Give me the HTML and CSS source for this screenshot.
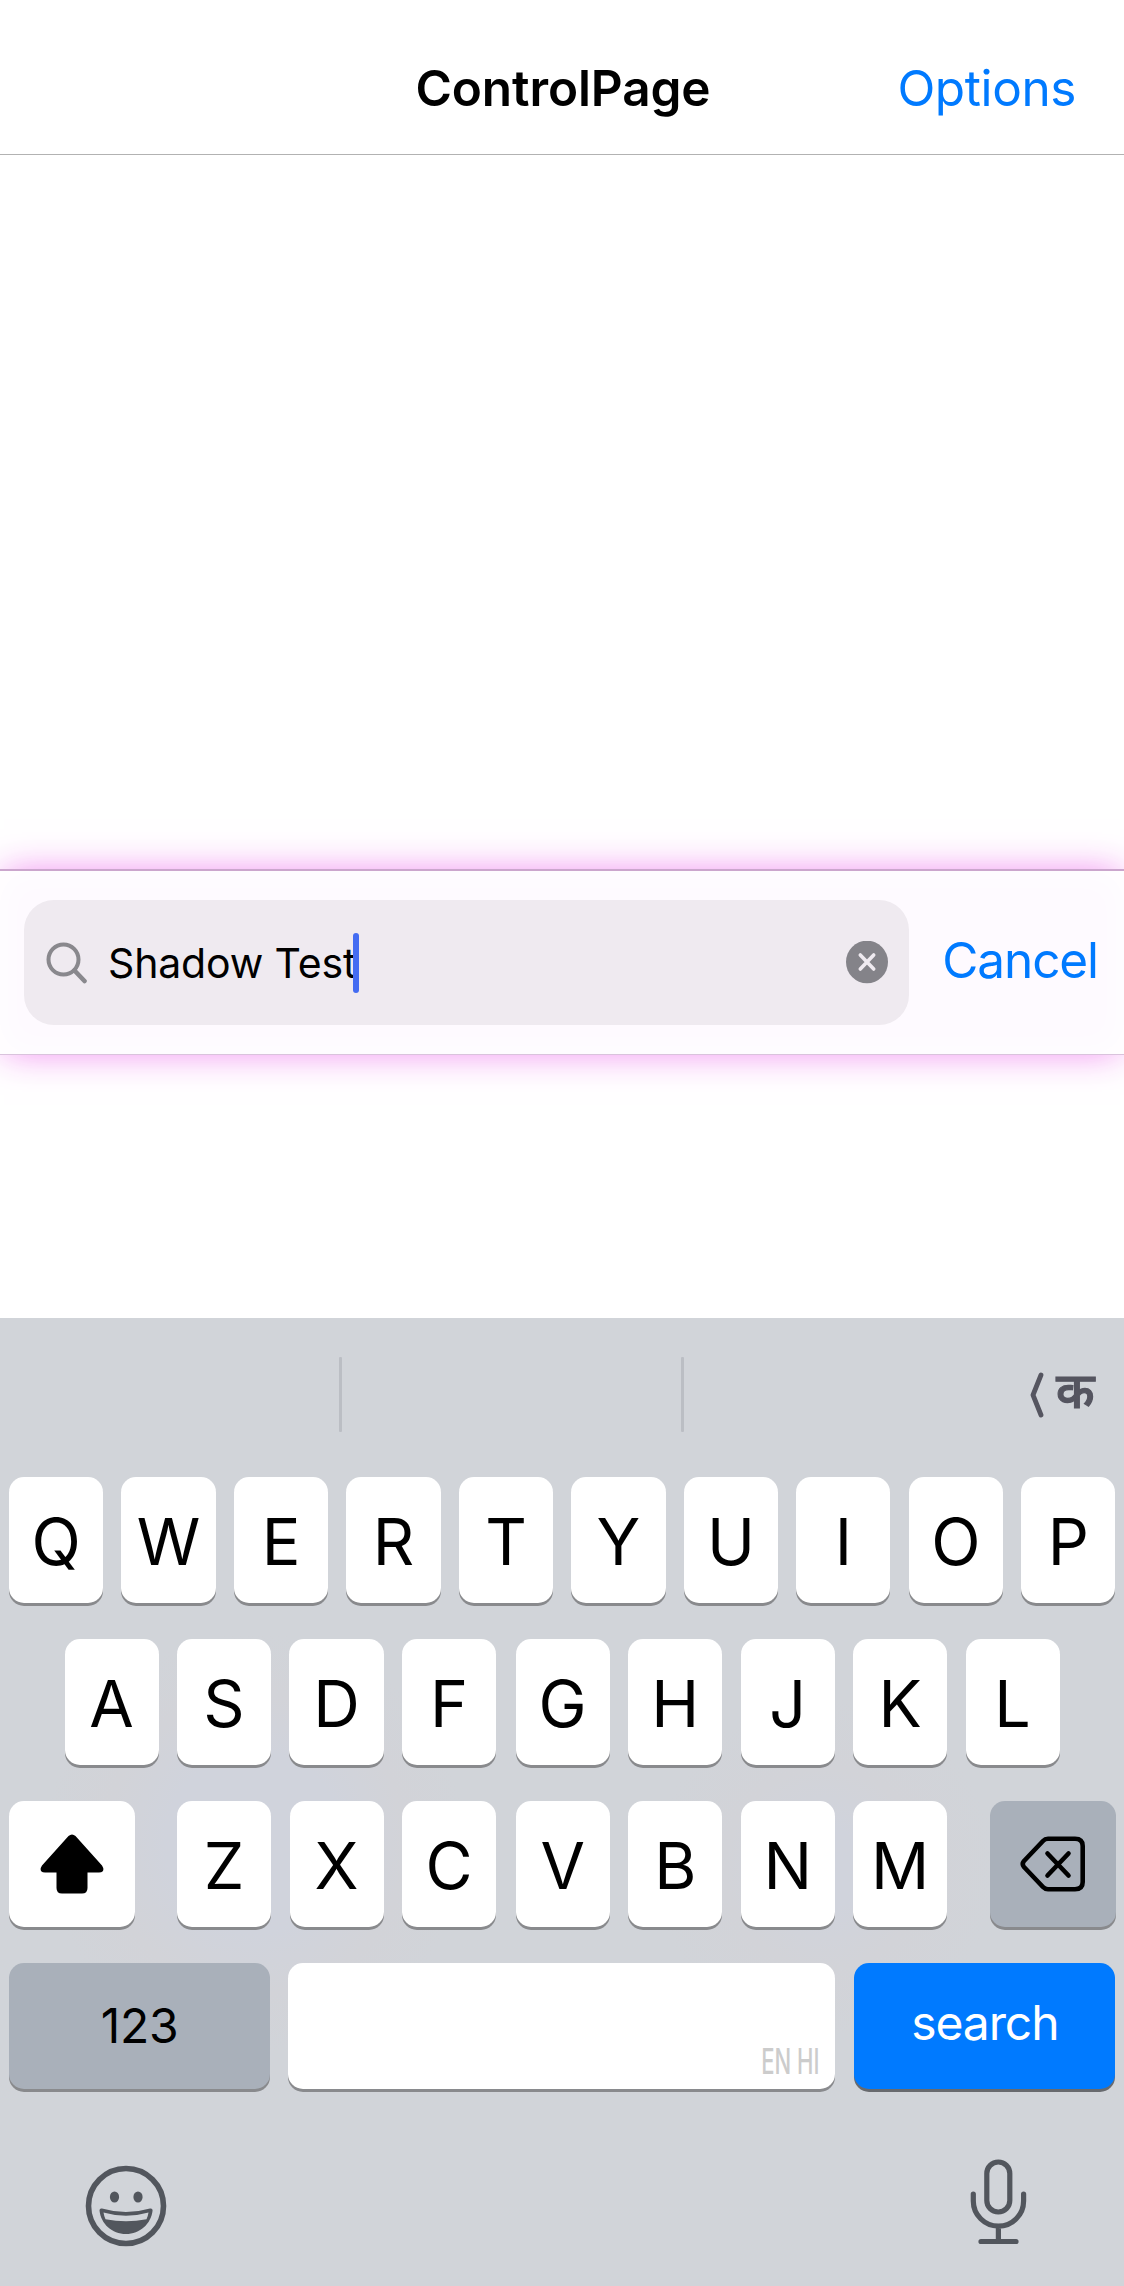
FILE: index.html
```html
<!DOCTYPE html>
<html lang="en">
<head>
<meta charset="utf-8">
<title>ControlPage</title>
<link rel="stylesheet" href="styles.css">
</head>
<body>
<header class="nav">
  <h1 class="nav-title">ControlPage</h1>
  <a class="nav-action">Options</a>
</header>
<main class="content">
  <div class="searchbar">
    <div class="field">
      <svg class="glass" width="42" height="42" viewBox="0 0 42 42" fill="none" stroke="#89888d" stroke-width="4" stroke-linecap="round"><circle cx="17.5" cy="17.5" r="15"/><path d="M28.5 28.5 38.5 39" stroke-width="4.6"/></svg>
      <span class="query">Shadow Test</span><span class="caret"></span>
      <svg class="clear" width="42" height="43" viewBox="0 0 42 43"><ellipse cx="21" cy="21" rx="21" ry="21.3" fill="#848389"/><path d="M14.3 14 27.7 28M27.7 14 14.3 28" stroke="#efeaf0" stroke-width="3.6" stroke-linecap="round"/></svg>
    </div>
    <a class="cancel">Cancel</a>
  </div>
</main>
<section class="keyboard">
  <div class="suggestions">
    <span class="slot"></span><span class="rule"></span><span class="slot"></span><span class="rule"></span>
    <span class="slot lang">
      <svg width="15" height="46" viewBox="0 0 15 46" fill="none" stroke="#555560" stroke-width="4.8" stroke-linecap="round" stroke-linejoin="round"><path d="M11 3 3 23 11 43"/></svg>
      <span class="hindi" lang="hi">क</span>
    </span>
  </div>
  <div class="row">
    <span class="key">Q</span><span class="key">W</span><span class="key">E</span><span class="key">R</span><span class="key">T</span><span class="key">Y</span><span class="key">U</span><span class="key">I</span><span class="key">O</span><span class="key">P</span>
  </div>
  <div class="row row-mid">
    <span class="key">A</span><span class="key">S</span><span class="key">D</span><span class="key">F</span><span class="key nudge">G</span><span class="key">H</span><span class="key">J</span><span class="key">K</span><span class="key">L</span>
  </div>
  <div class="row row-low">
    <span class="key wide shift"><svg width="64" height="60" viewBox="0 0 64 60"><path d="M28.5 2Q32 -1 35.5 2L62 31.5Q64.5 35.5 62.5 37.5Q61.5 38.5 59 38.5H47.5V54Q47.5 59.5 42 59.5H22Q16.5 59.5 16.5 54V38.5H5Q2.5 38.5 1.5 37.5Q-.5 35.5 2 31.5Z"/></svg></span>
    <span class="key">Z</span><span class="key">X</span><span class="key">C</span><span class="key nudge">V</span><span class="key">B</span><span class="key">N</span><span class="key">M</span>
    <span class="key wide dark del"><svg width="66" height="56" viewBox="0 0 66 56" fill="none" stroke="#000" stroke-width="4.6" stroke-linecap="round" stroke-linejoin="round"><path d="M28 2.8H55Q62.7 2.8 62.7 10V46Q62.7 53.2 55 53.2H28Q25 53.2 23 51L4 31Q1.5 28 4 25L23 5Q25 2.8 28 2.8Z"/><path d="M27.5 17.5 48.5 39.5M48.5 17.5 27.5 39.5"/></svg></span>
  </div>
  <div class="row row-base">
    <span class="key dark num">123</span>
    <span class="key space"><span class="languages">EN HI</span></span>
    <span class="key go">search</span>
  </div>
  <div class="dock">
    <svg width="82" height="82" viewBox="0 0 82 82"><circle cx="41" cy="41" r="37.5" fill="none" stroke="#52565d" stroke-width="5.6"/><ellipse cx="29.5" cy="32" rx="4.6" ry="5.5" fill="#52565d"/><ellipse cx="53" cy="32" rx="4.6" ry="5.5" fill="#52565d"/><path d="M17 43.5Q41 50.5 65 43.5Q67.6 43 67.6 45.5C66 59 55 69 41 69S16 59 14.5 45.5Q14.5 43 17 43.5Z" fill="#52565d"/><path d="M18.5 47.5Q41 54 63.5 47.5Q63 51 61.5 54.2Q41 58.5 20.5 54.2Q19 51 18.5 47.5Z" fill="#d1d4d9"/></svg>
    <svg width="58" height="86" viewBox="0 0 58 86" fill="none" stroke="#52565d" stroke-width="5.2" stroke-linecap="round"><rect x="16.8" y="3" width="23" height="50" rx="11.5"/><path d="M3.3 35V42A25 25 0 0 0 53.6 42V35M28.4 68V82M11 82.5H46"/></svg>
  </div>
</section>
</body>
</html>
```
FILE: styles.css
```css
* { box-sizing: border-box; }
body {
  margin: 0;
  width: 1124px;
  height: 2286px;
  overflow: hidden;
  display: flex;
  flex-direction: column;
  background: #fff;
  color: #000;
  font-family: Inter, "Noto Sans", "Liberation Sans", sans-serif;
}
.nav {
  height: 155px;
  padding: 22px 48px 0 0;
  border-bottom: 1px solid #b2b2b2;
  display: grid;
  grid-template-columns: 1fr auto 1fr;
  align-items: center;
  line-height: 60px;
}
.nav-title { grid-column: 2; margin: 0 0 0 50px; font-size: 49.5px; font-weight: 600; letter-spacing: -0.1px; }
.nav-action { justify-self: end; color: #007aff; font-size: 49.5px; letter-spacing: -0.4px; }

.content { height: 1163px; padding-top: 714px; }
.searchbar {
  height: 186px;
  padding: 0 26px 0 24px;
  display: flex;
  align-items: center;
  justify-content: space-between;
  background: #fefaff;
  border-top: 2px solid #cba6cd;
  border-bottom: 1px solid #d9c3dc;
  box-shadow: 0 0 36px -4px rgba(238, 120, 238, 0.95), inset 0 0 36px #fff;
}
.field {
  width: 885px;
  height: 125px;
  padding: 0 21px 0 22px;
  border-radius: 30px;
  background: #efeaf0;
  display: flex;
  align-items: center;
}
.query { margin-left: 20px; font-size: 41px; letter-spacing: -0.15px; line-height: 60px; white-space: nowrap; }
.caret { width: 6px; height: 60px; border-radius: 3px; background: #446cf2; margin-left: -3.5px; }
.clear { margin-left: auto; }
.cancel { padding-bottom: 6px; color: #007aff; font-size: 49.5px; letter-spacing: -1.1px; line-height: 60px; }

.keyboard {
  height: 968px;
  padding: 0 8.5px 0 9px;
  display: flex;
  flex-direction: column;
  background:
    radial-gradient(circle at 255px 525px, #d0d3dc 0 90px, #d2d3d8 150px, rgba(210, 211, 216, 0) 210px),
    radial-gradient(circle at 825px 550px, #d0d3dc 0 40px, #d2d3d8 100px, rgba(210, 211, 216, 0) 170px),
    #d1d4d9;
}
.suggestions { height: 159px; margin: 0 -8.5px 0 -9px; padding-top: 39px; display: flex; }
.slot { width: 339px; height: 75px; }
.rule { width: 3px; height: 75px; border-radius: 1px; background: #bbbec4; }
.lang { width: 440px; padding-right: 29px; display: flex; justify-content: flex-end; align-items: center; gap: 11px; color: #555560; }
.hindi { width: 39px; margin-top: -7px; font-size: 49px; font-weight: 500; line-height: 60px; -webkit-text-stroke: 1.2px #555560; }

.row { height: 126px; margin-bottom: 36px; display: flex; gap: 18.4px; }
.key {
  width: 94.1px;
  height: 126px;
  flex: none;
  border-radius: 15px;
  background: #fff;
  box-shadow: 0 3px 0 #898a8d;
  display: flex;
  align-items: center;
  justify-content: center;
  padding-top: 3px;
  font-size: 64.5px;
  line-height: 78px;
}
.row-mid { padding-left: 55.5px; }
.nudge { margin-left: 1.2px; }
.wide { width: 126px; padding-top: 0; }
.shift { margin-right: 23.7px; }
.shift svg { margin-right: 1px; }
.del { margin-left: 24px; }
.dark { background: #a9b0ba; }
.num { width: 261px; padding-top: 0; font-size: 48px; letter-spacing: -0.3px; }
.space { width: 546.8px; align-items: flex-end; justify-content: flex-end; padding-right: 16px; }
.go { width: 261.5px; padding: 0 0 6px 1px; background: #007aff; color: #fff; box-shadow: 0 3px 0 #686a6e; font-size: 48px; letter-spacing: -1.1px; }
.languages { padding-bottom: 2px; font-size: 35px; font-weight: 500; line-height: 52px; color: #ccc; transform: scaleX(0.63); transform-origin: right; }

.dock { flex: 1; padding: 34px 88px 0 76px; display: flex; justify-content: space-between; align-items: flex-start; }
.dock svg:first-child { margin-top: 5.5px; }
```
